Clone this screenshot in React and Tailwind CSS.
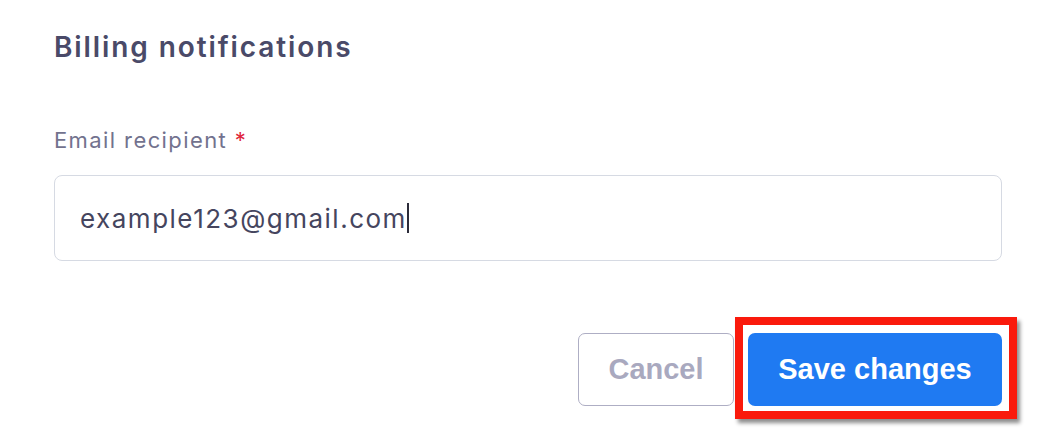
import React from "react";

const BillingNotifications = () => {
  return (
    <div className="min-h-[428px] bg-white pl-[54px] pr-[50px] pt-[31px] font-['Inter',sans-serif]">
      {/* Header */}
      <h2 className="text-[28px] leading-[32px] font-semibold tracking-[1.9px] text-[#4a4a68]">
        Billing notifications
      </h2>

      {/* Email field */}
      <label className="mt-[63px] block text-[22px] leading-[28px] tracking-[1.4px] text-[#72728e]">
        Email recipient <span className="text-[#e0263c]">*</span>
      </label>
      <div className="mt-[21px] flex h-[86px] items-center rounded-[8px] border border-[#d6dae3] bg-white pl-[25px]">
        <span className="text-[26px] tracking-[1.5px] text-[#45455e]">example123@gmail.com</span>
        <span className="h-[30px] w-[2px] bg-[#2c2c3a]" />
      </div>

      {/* Actions */}
      <div className="mt-[72px] flex justify-end gap-[14px] font-['Liberation_Sans',Arial,sans-serif]">
        <button className="h-[73px] w-[156px] rounded-[7px] border border-[#aeaec4] bg-white text-[29px] font-bold text-[#a9a9bf]">
          Cancel
        </button>
        <div className="relative">
          <button className="h-[73px] w-[254px] rounded-[7px] bg-[#1f7af2] text-[29px] font-bold text-white">
            Save changes
          </button>
          {/* highlight annotation */}
          <div className="pointer-events-none absolute -top-[16px] -left-[13px] -right-[15px] -bottom-[13px] border-[8px] border-[#fa1a0c] shadow-[3px_4px_4px_rgba(0,0,0,0.45)]" />
        </div>
      </div>
    </div>
  );
};

export default function App() {
  return <BillingNotifications />;
}
